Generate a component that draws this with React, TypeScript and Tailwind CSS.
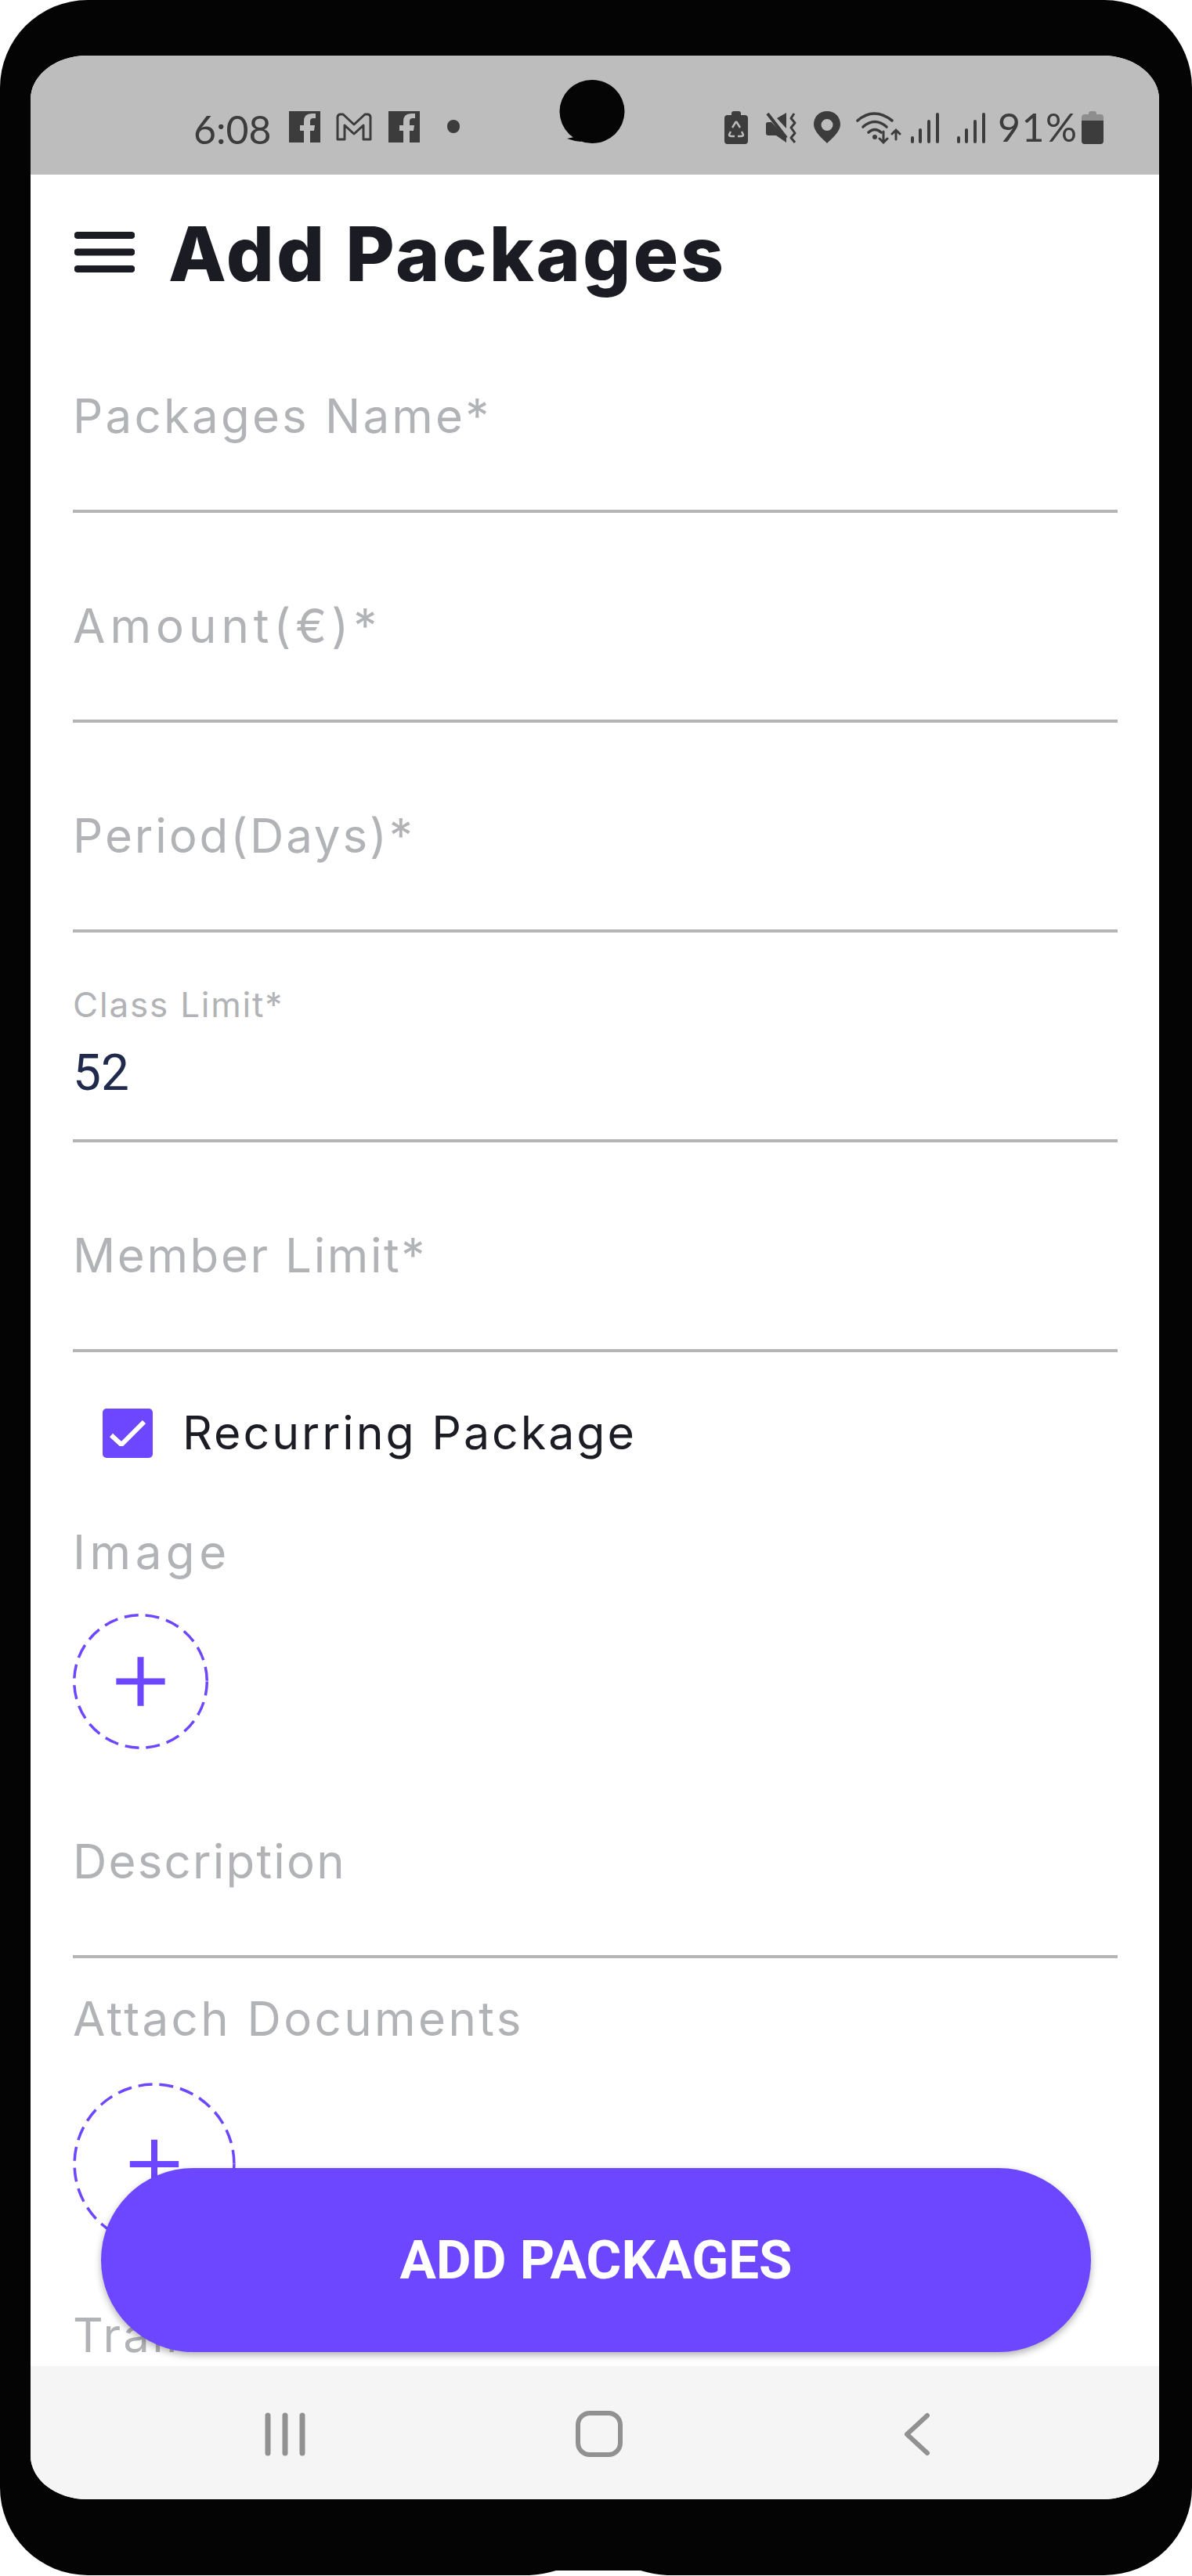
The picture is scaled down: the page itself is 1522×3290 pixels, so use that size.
import { ReactNode } from "react";

const labelCls =
  "font-[Inter,sans-serif] text-[60px] leading-[80px] text-[#b1b3b6] whitespace-nowrap";

const Field = ({
  label,
  tracking = "tracking-[3.2px]",
  children,
}: {
  label: string;
  tracking?: string;
  children?: ReactNode;
}) => (
  <div className="h-[268px] border-b-[4px] border-[#b5b5b5] flex flex-col justify-end pb-[80px]">
    {children ?? <div className={`${labelCls} ${tracking}`}>{label}</div>}
  </div>
);

const AddCircle = ({ size, plus }: { size: number; plus: number }) => (
  <svg width={size} height={size} viewBox="0 0 100 100" className="block">
    <circle
      cx="50"
      cy="50"
      r="49"
      fill="none"
      stroke="#6c47ff"
      strokeWidth={(3.5 * 100) / size}
      strokeDasharray={`${(18 * 100) / size} ${(9 * 100) / size}`}
    />
    <path
      d={`M50 ${50 - plus}V${50 + plus}M${50 - plus} 50H${50 + plus}`}
      stroke="#6c47ff"
      strokeWidth={(8 * 100) / size}
    />
  </svg>
);

const FbIcon = () => (
  <svg width="40" height="40" viewBox="0 0 40 40" className="block">
    <path
      d="M0 0H40V40H27V25H32L33 18H27V13Q27 9 31 9H34V3H29Q19 3 19 13V18H14V25H19V40H0Z"
      fill="#3c3c3c"
    />
  </svg>
);

const Signal = () => (
  <svg width="38" height="40" viewBox="0 0 38 40" className="block">
    <g fill="#3c3c3c">
      <rect x="1" y="31" width="4" height="9" rx="2" />
      <rect x="11" y="21" width="4" height="19" rx="2" />
      <rect x="22" y="10" width="4" height="30" rx="2" />
      <rect x="33" y="1" width="4" height="39" rx="2" />
    </g>
  </svg>
);

const StatusBar = () => (
  <div className="relative h-[152px] shrink-0 bg-[#bdbdbd] flex items-start pt-[71px] pl-[208px] text-[#3c3c3c]">
    <span className="font-[Lato,sans-serif] text-[50px] leading-[46px] w-[122px]">6:08</span>
    <FbIcon />
    {/* gmail */}
    <svg width="46" height="36" viewBox="0 0 46 36" className="block ml-[20px] mt-[2px]">
      <path
        d="M2 34V6Q2 2 6 2H9L23 15L37 2H40Q44 2 44 6V34H35V16L23 27L11 16V34Z"
        fill="none"
        stroke="#3c3c3c"
        strokeWidth="3"
        strokeLinejoin="round"
      />
    </svg>
    <div className="ml-[21px]">
      <FbIcon />
    </div>
    <div className="ml-[35px] mt-[11px] w-[16px] h-[17px] rounded-full bg-[#3c3c3c]" />

    {/* camera */}
    <svg width="94" height="84" viewBox="0 0 94 84" className="absolute left-[665px] top-[31px]">
      <ellipse cx="52" cy="40.500" rx="41.500" ry="40.500" fill="#050505" />
      <path d="M20 75L34 72L38 79Q28 78 20 75Z" fill="#050505" />
    </svg>

    <div className="absolute left-[886px] top-[71px] flex items-start">
      {/* battery saver */}
      <svg width="30" height="42" viewBox="0 0 30 42" className="block">
        <path
          d="M9 3Q9 0 12 0H18Q21 0 21 3V5H26Q30 5 30 9V38Q30 42 26 42H4Q0 42 0 38V9Q0 5 4 5H9Z"
          fill="#3c3c3c"
        />
        <path
          d="M15 13L10 21M15 13L20 21M8 26L6 30Q6 32 9 32H13M22 26L24 30Q24 32 21 32H17"
          fill="none"
          stroke="#bdbdbd"
          strokeWidth="2.400"
        />
      </svg>
      {/* mute + vibrate */}
      <svg width="40" height="40" viewBox="0 0 40 40" className="block ml-[23px] mt-[2px]">
        <path d="M0 14Q0 12 3 12H7L26 32V38L13 29H3Q0 29 0 26Z" fill="#3c3c3c" />
        <path d="M14 7L26 0V20Z" fill="#3c3c3c" />
        <path d="M2 1L26 32" stroke="#3c3c3c" strokeWidth="4" />
        <path
          d="M36 1L32 7L37 13L32 19L37 26L32 32L37 38"
          fill="none"
          stroke="#3c3c3c"
          strokeWidth="3"
          strokeLinejoin="round"
        />
      </svg>
      {/* pin */}
      <svg width="34" height="41" viewBox="0 0 34 41" className="block ml-[21px]">
        <path
          fillRule="evenodd"
          d="M17 0C7 0 0 7 0 17C0 26 11 35 17 41C23 35 34 26 34 17C34 7 27 0 17 0ZM17 10A7.500 7.500 0 1 1 17 25A7.500 7.500 0 1 1 17 10Z"
          fill="#3c3c3c"
        />
      </svg>
      {/* wifi with arrows */}
      <svg width="58" height="42" viewBox="0 0 58 42" className="block ml-[20px]">
        <g fill="none" stroke="#3c3c3c" strokeWidth="3.600" strokeLinecap="round">
          <path d="M2 12Q23 -6 46 12" />
          <path d="M9 20Q24 7 39 20" />
          <path d="M16 27Q24 20 32 27" />
          <path d="M35 26V40M30 35L35 40L40 35" strokeWidth="3" />
          <path d="M51 36V24M46 29L51 24L56 29" strokeWidth="3" />
        </g>
        <circle cx="24" cy="33" r="3" fill="#3c3c3c" />
      </svg>
      <div className="ml-[11px] mt-[1px]">
        <Signal />
      </div>
      <div className="ml-[21px] mt-[1px]">
        <Signal />
      </div>
      <span className="ml-[15px] mt-[-3px] font-[Lato,sans-serif] text-[50px] leading-[46px] tracking-[1.500px] w-[107px]">
        91%
      </span>
      <svg width="28" height="42" viewBox="0 0 28 42" className="block">
        <path d="M9 3Q9 0 12 0H16Q19 0 19 3V4H24Q28 4 28 8V12H0V8Q0 4 4 4H9Z" fill="#8e8e8e" />
        <path d="M0 12H28V38Q28 42 24 42H4Q0 42 0 38Z" fill="#3c3c3c" />
      </svg>
    </div>
  </div>
);

const NavBar = () => (
  <div className="h-[170px] shrink-0 bg-[#f5f5f5] flex items-start pt-[59px] pl-[299px]">
    <svg width="52" height="56" viewBox="0 0 52 56" className="block">
      <path d="M4 4V52M26 4V52M48 4V52" stroke="#919191" strokeWidth="7" strokeLinecap="round" />
    </svg>
    <svg width="60" height="60" viewBox="0 0 60 60" className="block ml-[345px] mt-[-2px]">
      <rect x="3" y="3" width="54" height="53" rx="15" fill="none" stroke="#919191" strokeWidth="6" />
    </svg>
    <svg width="36" height="56" viewBox="0 0 36 56" className="block ml-[358px]">
      <path d="M31 4L5 28L31 52" fill="none" stroke="#919191" strokeWidth="6" strokeLinecap="round" strokeLinejoin="round" />
    </svg>
  </div>
);

export default function App() {
  return (
    <div className="w-[1522px] h-[3290px] bg-white overflow-hidden">
      <div className="relative w-[1522px] h-[3289px] bg-[#040404] rounded-[112px] pt-[71px] pl-[39px] pr-[42px] pb-[97px]">
        <div className="relative h-full bg-white overflow-hidden rounded-[72px/56px] flex flex-col">
          <StatusBar />

          <div className="flex-1 overflow-hidden pl-[54px] pr-[53px]">
            <div className="h-[164px] flex items-start pt-[71px]">
              <svg width="77" height="52" viewBox="0 0 77 52" className="block shrink-0 mt-[2px] ml-[2px]">
                <path d="M4 4.500H73M4 26H73M4 47.500H73" stroke="#1a1b23" strokeWidth="9" strokeLinecap="round" />
              </svg>
              <h1 className="ml-[43px] mt-[-27px] font-[Inter,sans-serif] font-extrabold text-[96px] leading-[114px] tracking-[3px] text-[#1a1b23] whitespace-nowrap">
                Add Packages
              </h1>
            </div>

            <Field label="Packages Name*" />
            <Field label="Amount(€)*" tracking="tracking-[6px]" />
            <Field label="Period(Days)*" tracking="tracking-[2.900px]" />
            <Field label="Class Limit*">
              <div className="font-[Inter,sans-serif] text-[44px] leading-[50px] tracking-[1.800px] text-[#b1b3b6] whitespace-nowrap">
                Class Limit*
              </div>
              <div className="mt-[26px] mb-[-33px] font-[Roboto,sans-serif] text-[64px] leading-[74px] text-[#1f2a4d]">
                52
              </div>
            </Field>
            <Field label="Member Limit*" tracking="tracking-[2.600px]" />

            <div className="flex items-center h-[73px] mt-[67px] ml-[38px]">
              <div className="w-[64px] h-[63px] rounded-[5px] bg-[#6c47ff] flex items-center justify-center">
                <svg width="46" height="33" viewBox="0 0 46 33" className="block">
                  <path d="M2 19L15 31L44 2" fill="none" stroke="#fff" strokeWidth="6" />
                </svg>
              </div>
              <span className="ml-[38px] font-[Inter,sans-serif] text-[59px] tracking-[3px] text-[#1b1c24] whitespace-nowrap">
                Recurring Package
              </span>
            </div>

            <div className={`${labelCls} tracking-[5.500px] mt-[75px]`}>Image</div>
            <div className="mt-[39px]">
              <AddCircle size={173} plus={18} />
            </div>

            <div className="h-[267px] border-b-[4px] border-[#b5b5b5] flex flex-col justify-end pb-[80px]">
              <div className={`${labelCls} tracking-[2.200px]`}>Description</div>
            </div>
            <div className={`${labelCls} tracking-[3.400px] mt-[37px]`}>Attach Documents</div>
            <div className="mt-[42px]">
              <AddCircle size={208} plus={15} />
            </div>
            <div className={`${labelCls} tracking-[3.200px] mt-[74px]`}>Trainer</div>
          </div>

          <NavBar />

          <button className="absolute left-[90px] top-[2698px] w-[1264px] h-[235px] rounded-full bg-[#6c47ff] shadow-[0_4px_10px_rgba(0,0,0,0.3)] font-[Roboto,sans-serif] font-bold text-[69px] text-white">
            ADD PACKAGES
          </button>
        </div>

        {/* bottom edge notch */}
        <svg width="176" height="6" viewBox="0 0 176 6" className="absolute left-[676px] bottom-0">
          <path d="M0 6Q18 5 34 0H142Q158 5 176 6Z" fill="#fff" />
        </svg>
      </div>
    </div>
  );
}
